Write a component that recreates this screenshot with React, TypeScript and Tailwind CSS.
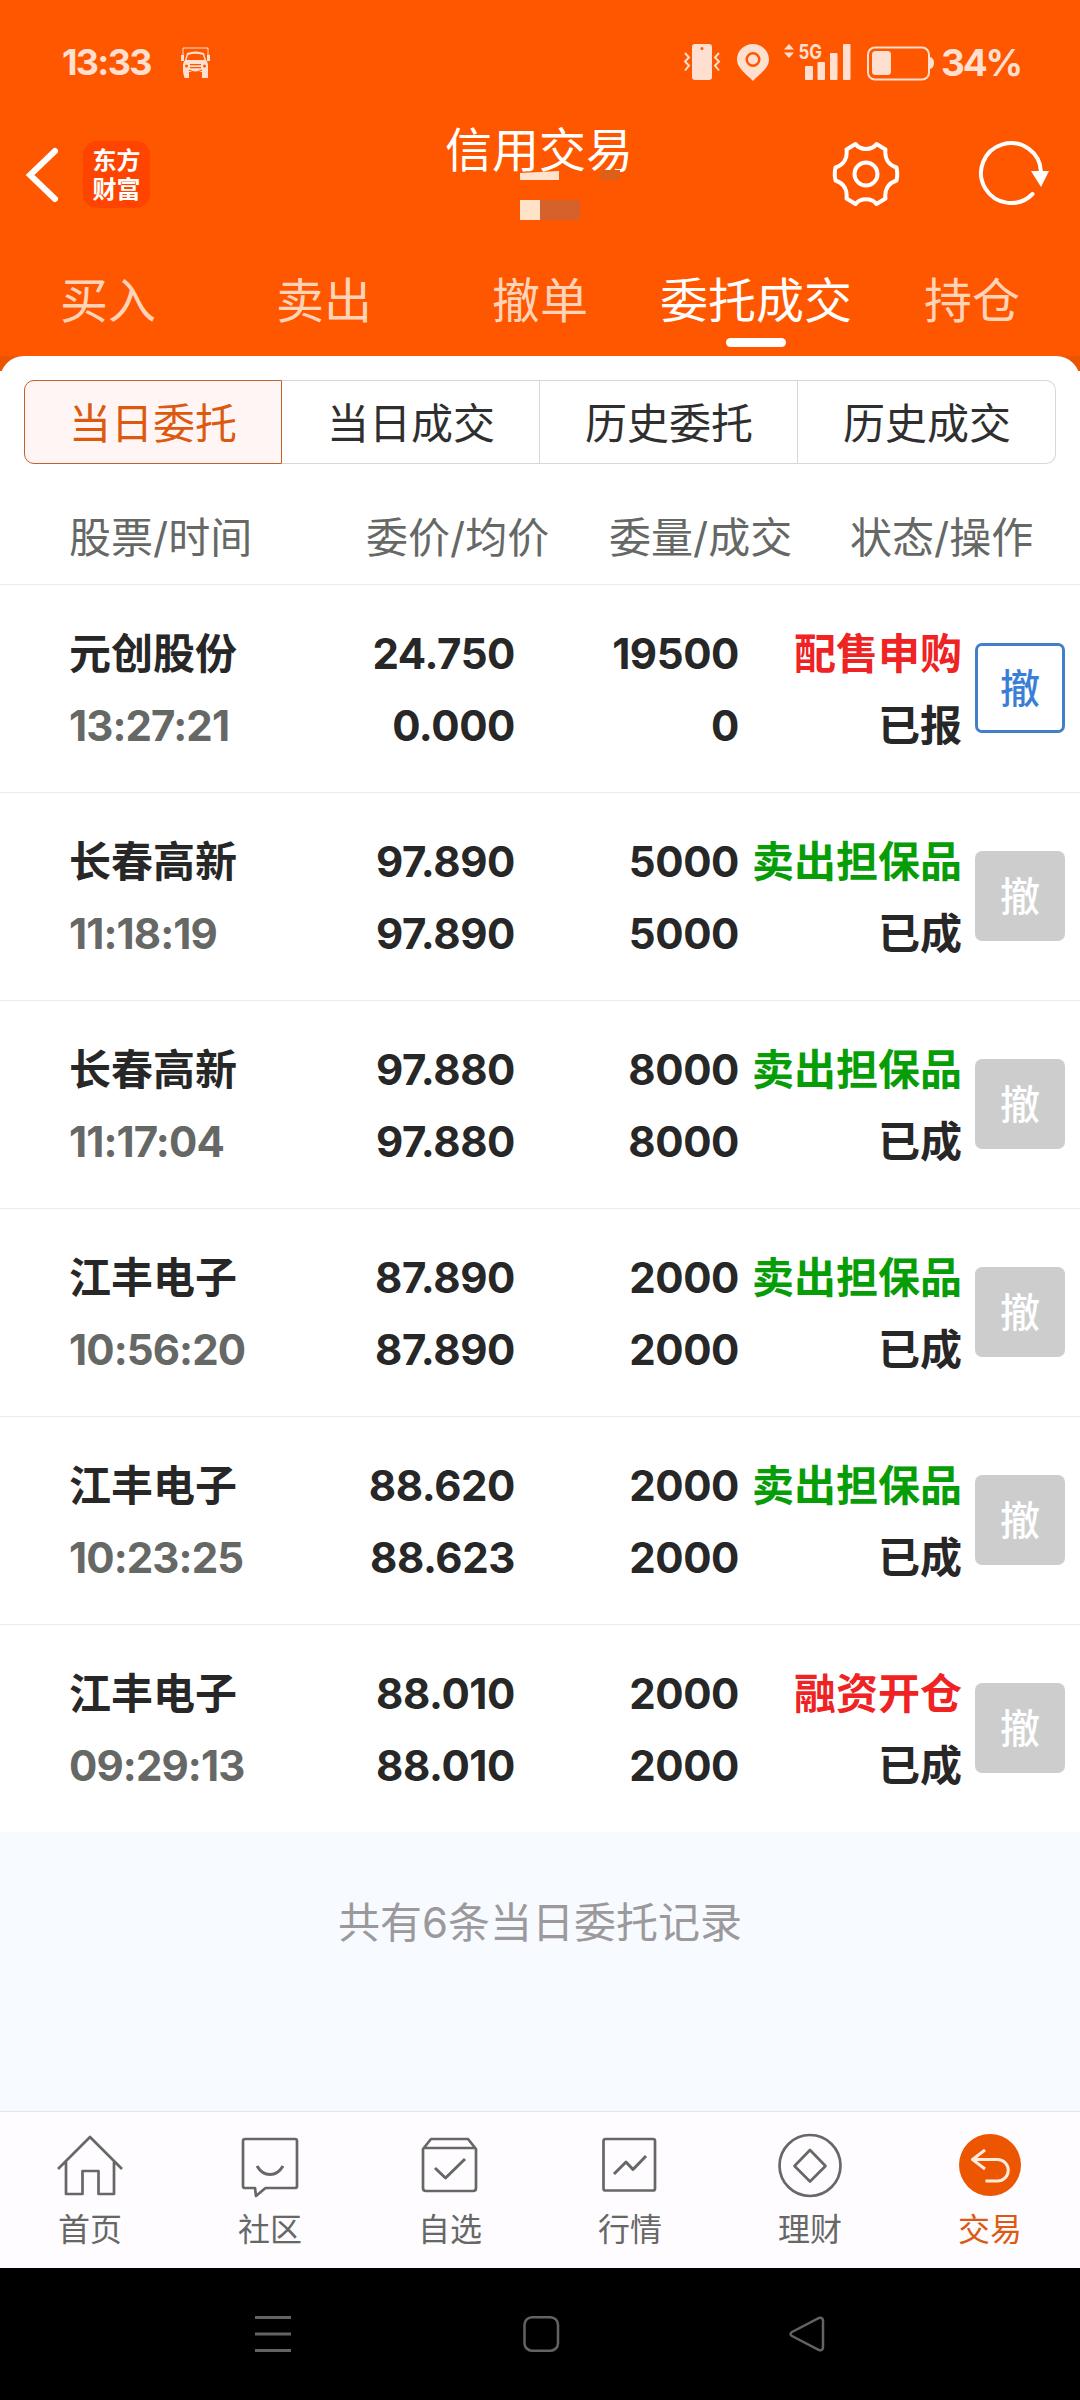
import type { ReactNode } from "react";
import clsx from "clsx";

type Order = {
  name: string;
  time: string;
  price: string;
  avgPrice: string;
  amount: string;
  filled: string;
  kind: string;
  side: "buy" | "sell";
  status: string;
  cancellable?: boolean;
};

const orders: Order[] = [
  { name: "元创股份", time: "13:27:21", price: "24.750", avgPrice: "0.000", amount: "19500", filled: "0", kind: "配售申购", side: "buy", status: "已报", cancellable: true },
  { name: "长春高新", time: "11:18:19", price: "97.890", avgPrice: "97.890", amount: "5000", filled: "5000", kind: "卖出担保品", side: "sell", status: "已成" },
  { name: "长春高新", time: "11:17:04", price: "97.880", avgPrice: "97.880", amount: "8000", filled: "8000", kind: "卖出担保品", side: "sell", status: "已成" },
  { name: "江丰电子", time: "10:56:20", price: "87.890", avgPrice: "87.890", amount: "2000", filled: "2000", kind: "卖出担保品", side: "sell", status: "已成" },
  { name: "江丰电子", time: "10:23:25", price: "88.620", avgPrice: "88.623", amount: "2000", filled: "2000", kind: "卖出担保品", side: "sell", status: "已成" },
  { name: "江丰电子", time: "09:29:13", price: "88.010", avgPrice: "88.010", amount: "2000", filled: "2000", kind: "融资开仓", side: "buy", status: "已成" },
];

const tabs = ["买入", "卖出", "撤单", "委托成交", "持仓"];
const filters = ["当日委托", "当日成交", "历史委托", "历史成交"];

function StatusBar() {
  return (
    <div className="flex h-[124px] items-start justify-between pr-[60px] pl-[62px] text-[#ffdfcf]">
      <div className="flex pt-[44px]">
        <span className="w-[119px] text-[36px] leading-[36px] font-bold tracking-[-1.7px]">13:33</span>
        <svg width="29" height="32" viewBox="0 0 29 32" className="mt-[3px]" fill="currentColor">
          <path d="M2 8V1h25v7" fill="none" stroke="currentColor" strokeWidth="1" />
          <path
            fillRule="evenodd"
            d="M6 6Q14.500 3 23 6L25 13Q27 15 27 18V25H2V18Q2 15 4 13ZM7 8L5.500 13H23.500L22 8Q14.500 5.500 7 8ZM9 17v1.200h11V17ZM9 20v1.200h11V20Z"
          />
          <path d="M0 8h3v6H0zM26 8h3v6h-3zM2 25h6v6H3.500zM21 25h6v6h-6z" />
          <circle cx="5.500" cy="19" r="1.500" fill="#ff5700" />
          <circle cx="23.500" cy="19" r="1.500" fill="#ff5700" />
          <path d="M8 23q6.500 4 13 0" fill="none" stroke="#ff5700" strokeWidth="1.200" />
        </svg>
      </div>
      <div className="flex pt-[35px]">
        <svg width="252" height="48" viewBox="0 -8 252 48" fill="currentColor">
          <path fillRule="evenodd" d="M11 1h14q3 0 3 3v30q0 3-3 3H11q-3 0-3-3V4q0-3 3-3zM18 4a1.500 1.500 0 1 0 0 3a1.500 1.500 0 0 0 0-3z" />
          <path d="M1 10l4 4.500l-4 4l4 4l-4 5M35 10l-4 4.500l4 4l-4 4l4 5" fill="none" stroke="currentColor" strokeWidth="2" />
          <path fillRule="evenodd" d="M69 1c9 0 16 7 16 15.500c0 9-10 15-16 21.500c-6-6.500-16-12.500-16-21.500C53 8 60 1 69 1zM69 9a7.500 7.500 0 1 0 0 15a7.500 7.500 0 0 0 0-15z" />
          <circle cx="69" cy="16.500" r="5" />
          <path d="M105 1l5 5.500h-10zM105 15l5-5.500h-10z" />
          <text x="114.500" y="15.500" fontSize="20" fontWeight="700" textLength="23.500" lengthAdjust="spacingAndGlyphs">5G</text>
          <rect x="121" y="23" width="8" height="14" rx="1" />
          <rect x="133.500" y="19" width="7.500" height="18" rx="1" />
          <rect x="146" y="10" width="7.500" height="27" rx="1" />
          <rect x="159" y="1" width="7.500" height="36" rx="1" />
          <rect x="184" y="4.500" width="61" height="32" rx="7" fill="none" stroke="currentColor" strokeWidth="2" />
          <rect x="188" y="8" width="19" height="24" rx="3.500" />
          <path d="M246 14q4 1 4 6t-4 6z" />
        </svg>
        <span className="mt-[8px] ml-[5px] w-[79px] text-[37px] leading-[40px] font-bold tracking-[-2.2px]">34%</span>
      </div>
    </div>
  );
}

function TitleBar() {
  return (
    <div className="relative flex h-[112px] text-white">
      <svg width="40" height="60" viewBox="0 0 40 60" className="mt-[21px] ml-[22px]">
        <path d="M33 6L8 30L33 54" fill="none" stroke="currentColor" strokeWidth="6" strokeLinecap="round" />
      </svg>
      <div className="mt-[17px] ml-[21px] flex h-[67px] w-[67px] flex-col items-center justify-center rounded-[14px] bg-[#ff4400] text-[24px] leading-[29px] font-bold">
        <span>东方</span>
        <span>财富</span>
      </div>
      <h1 className="mt-px ml-[295px] h-[50px] w-[188px] text-[47px] leading-[50px] font-normal whitespace-nowrap">信用交易</h1>
      <svg width="68" height="68" viewBox="0 0 68 68" className="mt-[16px] ml-[199px]" fill="none" stroke="currentColor" strokeWidth="4">
        <path
          strokeLinejoin="round"
          d="M23.500 4C28 10.500 40 10.500 44.500 4L53.500 9.500C52.500 17 55 24.500 64.500 27.500Q66 34 64.500 40.500C55 43.500 52.500 51 53.500 58.500L44.500 64C40 57.500 28 57.500 23.500 64L14.500 58.500C15.500 51 13 43.500 3.500 40.500Q2 34 3.500 27.500C13 24.500 15.500 17 14.500 9.500Z"
        />
        <circle cx="34" cy="34" r="11.500" />
      </svg>
      <svg width="74" height="68" viewBox="0 0 74 68" className="mt-[16px] ml-[77px]" fill="none" stroke="currentColor" strokeWidth="4">
        <path d="M64 32A30 30 0 1 0 55.500 54" strokeLinecap="round" />
        <path d="M54 31h18l-8 16z" fill="currentColor" stroke="none" />
      </svg>
      {/* masked account name */}
      <svg width="100" height="51" viewBox="0 0 100 51" className="absolute top-[45px] left-[520px]">
        <path d="M0 4L39 2V11H0z" fill="#ffe2cc" />
        <path d="M80 1h20v10H80z" fill="#dc6018" />
        <path d="M0 31h20v20H0z" fill="#ffe2c8" />
        <path d="M20 31h40v20H20z" fill="#d4622a" />
      </svg>
    </div>
  );
}

function TabBar() {
  return (
    <div className="grid h-[120px] grid-cols-5 text-[48px] leading-[56px]">
      {tabs.map((tab) => {
        const active = tab === "委托成交";
        return (
          <div key={tab} className={clsx("flex flex-col items-center pt-[37px] whitespace-nowrap", active ? "text-white" : "text-[#ffd3b8]")}>
            <span>{tab}</span>
            {active && <span className="mt-[9px] h-[9px] w-[60px] rounded-full bg-white" />}
          </div>
        );
      })}
    </div>
  );
}

function FilterBar() {
  return (
    <div className="mx-[24px] mt-[24px] grid h-[84px] grid-cols-4 text-[42px] text-[#2f2f2f]">
      {filters.map((label, i) => (
        <div
          key={label}
          className={clsx(
            "flex items-center justify-center border pt-[2px]",
            i === 0 ? "rounded-l-[10px] border-[#c4602c] bg-[#fff5f5] text-[#dc5a10]" : "border-l-0 border-[#d6d6dc] pl-px",
            i === filters.length - 1 && "rounded-r-[10px]"
          )}
        >
          {label}
        </div>
      ))}
    </div>
  );
}

function OrderRow({ order }: { order: Order }) {
  return (
    <div className="flex h-[208px] items-center border-t border-[#ebebeb] pl-[69px] text-[42px] leading-[72px] font-bold text-[#272727]">
      <div className="w-[200px] pt-[3px]">
        <div>{order.name}</div>
        <div className="tracking-[-0.9px] text-[#666866]">{order.time}</div>
      </div>
      <div className="w-[246px] pt-[3px] text-right tracking-[-0.4px]">
        <div>{order.price}</div>
        <div>{order.avgPrice}</div>
      </div>
      <div className="w-[224px] pt-[3px] text-right tracking-[-0.4px]">
        <div>{order.amount}</div>
        <div>{order.filled}</div>
      </div>
      <div className="w-[223px] pt-[3px] text-right whitespace-nowrap">
        <div className={order.side === "buy" ? "text-[#ef2323]" : "text-[#069d06]"}>{order.kind}</div>
        <div>{order.status}</div>
      </div>
      <button
        className={clsx(
          "mb-[2px] ml-[13px] flex h-[90px] w-[90px] items-center justify-center rounded-[7px] pt-[3px] text-[40px] font-medium",
          order.cancellable ? "border-[3px] border-[#427fc8] text-[#3a7fd6]" : "bg-[#cdcdcd] text-white"
        )}
      >
        撤
      </button>
    </div>
  );
}

function NavItem({ label, active, children }: { label: string; active?: boolean; children: ReactNode }) {
  return (
    <div className={clsx("flex flex-col items-center", active ? "text-[#dc5a14]" : "text-[#666866]")}>
      <svg width="68" height="68" viewBox="0 0 68 68" className="mt-[19px]" fill="none" stroke="currentColor" strokeWidth="2.700" strokeLinejoin="round">
        {children}
      </svg>
      <span className="mt-[11px] text-[32px] leading-[40px]">{label}</span>
    </div>
  );
}

function BottomNav() {
  return (
    <div className="grid h-[157px] grid-cols-6 border-t border-[#e6e2e6] bg-[#fffcff]">
      <NavItem label="首页">
        <path d="M2 38L34 6L66 38M10 31V63H26.500V40H42.500V63H58V31" />
      </NavItem>
      <NavItem label="社区">
        <path d="M9 8H59Q61 8 61 10V55Q61 57 59 57H29.500L20 65L19 57H9Q7 57 7 55V10Q7 8 9 8z" />
        <path d="M21 35Q26 43.500 34 43.500T47 35" strokeWidth="3" />
      </NavItem>
      <NavItem label="自选">
        <path d="M7 18L15 8H52L60 18V57Q60 60 57 60H10Q7 60 7 57zM7 17H60" />
        <path d="M19 37L29.500 47L49 28" strokeWidth="3" />
      </NavItem>
      <NavItem label="行情">
        <rect x="7.500" y="8" width="51.500" height="51.500" rx="2" />
        <path d="M18 43L30 31L37 38.500L50 25" strokeWidth="3" />
      </NavItem>
      <NavItem label="理财">
        <circle cx="34" cy="34.500" r="30.500" />
        <path d="M34 19L49.500 35L34 50.500L18.500 35z" />
      </NavItem>
      <NavItem label="交易" active>
        <circle cx="34" cy="34" r="31" fill="#ed5600" stroke="none" />
        <path d="M29 19L16.500 28.500L29 38M17 28.500H41.500A10.500 10.500 0 0 1 41.500 50H29.500" stroke="#ffeadc" strokeWidth="3" />
      </NavItem>
    </div>
  );
}

function SystemNav() {
  return (
    <div className="grid h-[132px] grid-cols-[546px_266px_268px] items-start bg-black pt-[46px] text-[#626462]">
      <svg width="40" height="40" viewBox="0 0 40 40" className="ml-[253px]" stroke="currentColor" strokeWidth="3">
        <path d="M2 3.500H38M2 20H38M2 36.500H38" />
      </svg>
      <svg width="40" height="40" viewBox="0 0 40 40" className="-ml-[25px]" fill="none" stroke="currentColor" strokeWidth="2.500">
        <rect x="3.500" y="3.200" width="33.500" height="33.500" rx="7.500" />
      </svg>
      <svg width="40" height="40" viewBox="0 0 40 40" className="-ml-[25px]" fill="none" stroke="currentColor" strokeWidth="2.500">
        <path d="M5 18L32 4Q36 3 36 7V33Q36 37 32 36L5 22Q2 20 5 18z" />
      </svg>
    </div>
  );
}

export default function App() {
  return (
    <div className="flex h-[2400px] w-[1080px] flex-col overflow-hidden bg-white font-['Inter','Noto_Sans_CJK_SC',sans-serif]">
      <header className="bg-[#ff5700]">
        <StatusBar />
        <TitleBar />
        <TabBar />
      </header>
      <div className="bg-linear-to-b from-[#e95500] from-[15px] to-white to-[15px]">
        <div className="flex h-[228px] flex-col rounded-t-[24px] bg-white">
          <FilterBar />
          <div className="mt-[46px] flex pl-[69px] text-[42px] leading-[56px] whitespace-nowrap text-[#666866]">
            <span className="w-[297px]">股票/时间</span>
            <span className="w-[243px]">委价/均价</span>
            <span className="w-[241px]">委量/成交</span>
            <span>状态/操作</span>
          </div>
        </div>
      </div>
      {orders.map((order) => (
        <OrderRow key={order.time} order={order} />
      ))}
      <div className="flex-1 bg-[#f7faff] pt-[63px] text-center text-[42px] leading-[56px] text-[#9b999b]">共有6条当日委托记录</div>
      <BottomNav />
      <SystemNav />
    </div>
  );
}
